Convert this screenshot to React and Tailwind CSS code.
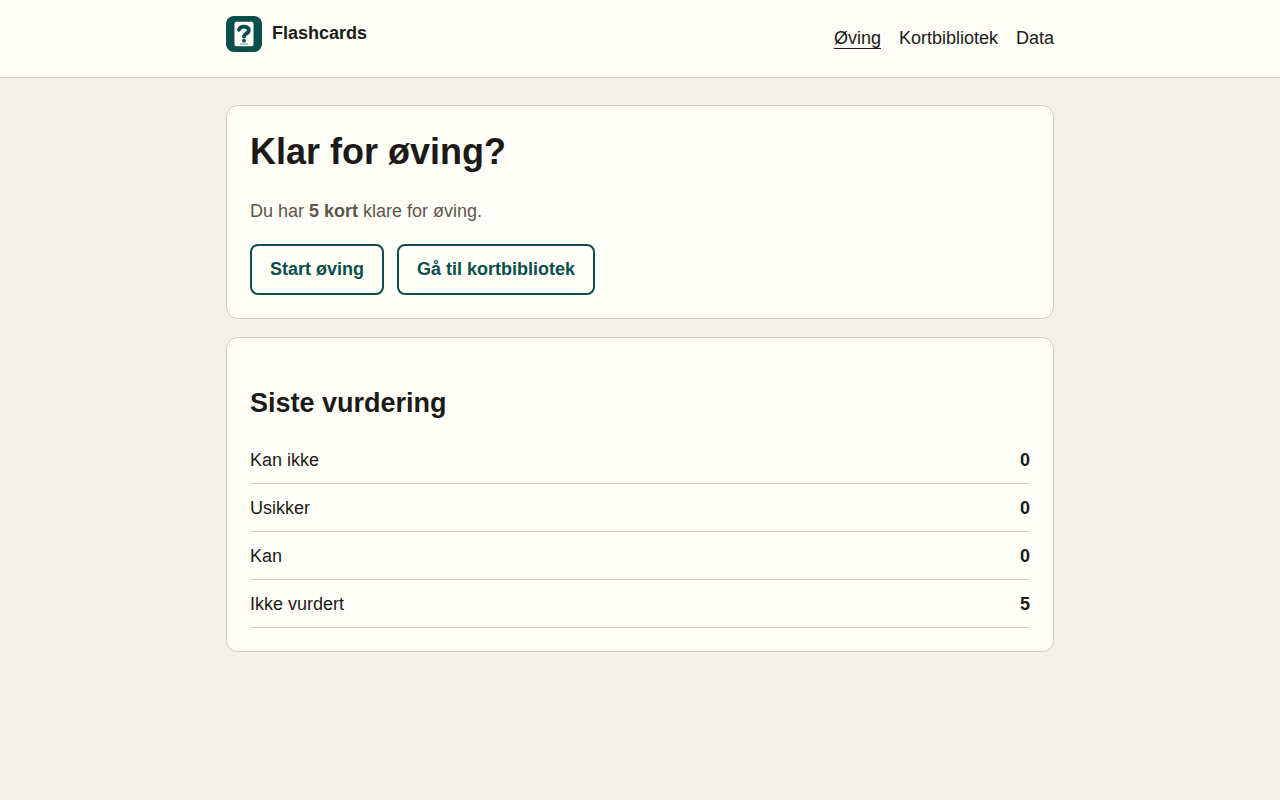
const navLinks = [
  { label: "Øving", href: "#practice", active: true },
  { label: "Kortbibliotek", href: "#library", active: false },
  { label: "Data", href: "#data", active: false },
];

const ratings = [
  { label: "Kan ikke", count: 0 },
  { label: "Usikker", count: 0 },
  { label: "Kan", count: 0 },
  { label: "Ikke vurdert", count: 5 },
];

const Logo = () => (
  <svg width="36" height="36" viewBox="0 0 36 36" aria-hidden="true" className="block shrink-0">
    <rect width="36" height="36" rx="8" fill="#0b4f4a" />
    <rect x="8.5" y="5.7" width="19" height="24.6" rx="2" fill="#fffef8" />
    <path
      d="M13 13.8c.6-2.1 2.4-3.2 4.9-3.2 2.9 0 4.9 1.4 4.9 3.7 0 3.4-4.8 3.3-4.8 6.2"
      fill="none"
      stroke="#0b4f4a"
      strokeWidth="3.9"
      strokeLinecap="round"
      strokeLinejoin="round"
    />
    <circle cx="18" cy="24.7" r="1.9" fill="#0b4f4a" />
    <rect x="14" y="27.6" width="8" height="0.9" rx="0.4" fill="#6f918c" />
  </svg>
);

const Card = ({ children }) => (
  <section className="rounded-xl border border-[#d3cfc5] bg-[#fffef8] p-[23px]">{children}</section>
);

const ActionButton = ({ children }) => (
  <button
    type="button"
    className="cursor-pointer rounded-lg border-2 border-[#0b4f4a] px-[18px] py-[9px] font-bold text-[#0b4f4a] hover:bg-[#0b4f4a] hover:text-[#fffef8]"
  >
    {children}
  </button>
);

const App = () => {
  return (
    <div className="min-h-screen bg-[#f4f0ea] font-['Liberation_Sans',Arial,sans-serif] text-[18px] leading-[29px] text-[#1c1a17]">
      <header className="border-b border-[#d3cfc5] bg-[#fffef8]">
        <div className="mx-auto flex max-w-[828px] justify-between py-4">
          <a href="#practice" className="flex gap-[10px] self-start leading-[34px] font-bold">
            <Logo />
            <span>Flashcards</span>
          </a>
          <nav className="flex min-h-[45px] items-center gap-[18px]">
            {navLinks.map(link => (
              <a
                key={link.label}
                href={link.href}
                aria-current={link.active ? "page" : undefined}
                className={link.active ? "underline decoration-1 underline-offset-4" : "hover:underline"}
              >
                {link.label}
              </a>
            ))}
          </nav>
        </div>
      </header>

      <main className="mx-auto flex max-w-[828px] flex-col gap-[18px] py-[27px]">
        {/* Start practice */}
        <Card>
          <h1 className="text-[36px] leading-[45px] font-bold">Klar for øving?</h1>
          <p className="mt-[23px] text-[#5c564d]">
            Du har <strong>5 kort</strong> klare for øving.
          </p>
          <div className="mt-[18px] flex flex-wrap gap-[13px]">
            <ActionButton>Start øving</ActionButton>
            <ActionButton>Gå til kortbibliotek</ActionButton>
          </div>
        </Card>

        {/* Latest ratings */}
        <Card>
          <h2 className="mt-[24px] text-[27px] leading-[36px] font-bold">Siste vurdering</h2>
          <table className="mt-[15px] w-full border-separate border-spacing-0">
            <tbody>
              {ratings.map(rating => (
                <tr key={rating.label}>
                  <th scope="row" className="border-b border-[#d3cfc5] pt-[10px] pb-2 text-left font-normal">
                    {rating.label}
                  </th>
                  <td className="border-b border-[#d3cfc5] pt-[10px] pb-2 text-right font-bold">{rating.count}</td>
                </tr>
              ))}
            </tbody>
          </table>
        </Card>
      </main>
    </div>
  );
};

export default App;
